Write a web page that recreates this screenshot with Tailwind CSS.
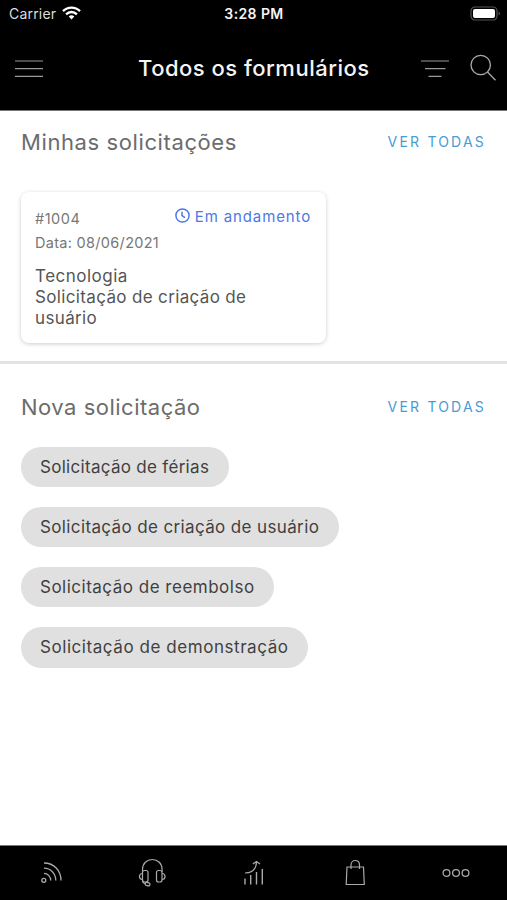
<!DOCTYPE html>
<html lang="pt-BR">
  <head>
    <meta charset="UTF-8" />
    <meta name="viewport" content="width=device-width, initial-scale=1.0" />
    <title>Todos os formulários</title>
    <!-- using tailwind css for styling -->
    <script src="https://cdn.jsdelivr.net/npm/@tailwindcss/browser@4"></script>
  </head>
  <body class="bg-white font-['Inter',sans-serif]">
    <div class="flex h-[900px] w-[507px] flex-col overflow-hidden whitespace-nowrap">
      <!-- status bar and title -->
      <header class="h-[111px] shrink-0 border-b border-[#777] bg-black text-[#f4f4f4]">
        <div class="grid h-[27px] grid-cols-3 items-center pl-[9px] pr-[6px] text-[14px]">
          <div class="flex items-center gap-[6px] text-[#ddd]">
            <span class="tracking-[0.2px]">Carrier</span>
            <svg class="-mt-[1px] h-[14px] w-[19px]" viewBox="0 0 19 14" fill="none" stroke="#fff" stroke-width="2.4">
              <path d="M1 5.1C5.8.4 13.2.4 18 5.1" />
              <path d="M4.1 8.3c3.1-3 7.7-3 10.8 0" />
              <path d="M6.7 10.4 9.5 13.4l2.8-3c-1.6-1.4-4-1.4-5.6 0z" fill="#fff" stroke="none" />
            </svg>
          </div>
          <span class="-ml-[2px] text-center font-semibold tracking-[0.4px]">3:28 PM</span>
          <svg class="-mt-[1px] h-[15px] w-[31px] justify-self-end" viewBox="0 0 31 15">
            <rect x="1" y="1" width="26" height="13" rx="4" fill="none" stroke="#555" stroke-width="1.2" />
            <rect x="3" y="3" width="22" height="9" rx="2" fill="#fff" />
            <path d="M28.6 5.5c1.6.6 1.6 3.4 0 4z" fill="#666" />
          </svg>
        </div>
        <div class="flex h-[83px] items-center pl-[15px] pr-[11px]">
          <svg class="h-[18px] w-7" viewBox="0 0 28 18" stroke="#999" stroke-width="1.2">
            <path d="M0 1h28M0 8.7h28M0 16.4h28" />
          </svg>
          <h1 class="ml-[95px] w-[232px] text-[22px] font-medium tracking-[0.5px]">Todos os formulários</h1>
          <svg class="ml-[51px] h-[18px] w-7" viewBox="0 0 28 18" stroke="#999" stroke-width="1.2">
            <path d="M0 1h28M4 8.7h20.5M7.5 16.4h13" />
          </svg>
          <svg class="-mt-[3px] ml-auto h-[27px] w-[26px]" viewBox="0 0 26 27" fill="none" stroke="#aaa" stroke-width="1.3">
            <circle cx="10.7" cy="11" r="9.7" />
            <path d="m17.5 18 8 8.3" />
          </svg>
        </div>
      </header>

      <main class="flex-1 text-[#6c6c6c]">
        <!-- my requests -->
        <section class="h-[253px] border-b-3 border-[#e3e3e3] px-[21px] pt-[15px]">
          <div class="flex h-8 items-center justify-between">
            <h2 class="text-[22px] tracking-[0.6px]">Minhas solicitações</h2>
            <a class="-mt-[2px] text-[14px] tracking-[2.2px] text-[#489bd5]">VER TODAS</a>
          </div>
          <article class="mt-[34px] h-[151px] w-[305px] rounded-lg px-[14px] pt-[13px] shadow-[0_1px_4px_#0003]">
            <div class="flex items-start justify-between">
              <div class="pt-[2px] text-[14.5px] leading-[24.5px] text-[#777]">
                <p class="tracking-[0.5px]">#1004</p>
                <p class="-mt-[1px] tracking-[0.3px]">Data: 08/06/2021</p>
              </div>
              <div class="mr-[1px] flex items-center gap-[5px] text-[15px] leading-[24px] text-[#4d78e5]">
                <svg class="-mt-[3px] h-[15px] w-[15px]" viewBox="0 0 15 15" fill="none" stroke="currentColor" stroke-width="1.5">
                  <circle cx="7.5" cy="7.5" r="6.6" />
                  <path d="M7 3.7v4l3 2" />
                </svg>
                <span class="tracking-[0.87px]">Em andamento</span>
              </div>
            </div>
            <p class="mt-[11px] text-[17px] leading-[21px] tracking-[0.35px] text-[#555]">
              <span class="tracking-[0.5px]">Tecnologia</span><br />Solicitação de criação de<br />usuário
            </p>
          </article>
        </section>

        <!-- new request -->
        <section class="px-[21px] pt-[27px]">
          <div class="flex h-8 items-center justify-between">
            <h2 class="text-[22px] tracking-[0.5px]">Nova solicitação</h2>
            <a class="-mt-[2px] text-[14px] tracking-[2.2px] text-[#489bd5]">VER TODAS</a>
          </div>
          <div class="mt-[23.5px] flex flex-col items-start gap-5 text-[17px] leading-[40.3px] text-[#404040]">
            <span class="w-[208px] rounded-full bg-[#e0e0e0] pl-[19px] tracking-[0.3px]">Solicitação de férias</span>
            <span class="w-[318px] rounded-full bg-[#e0e0e0] pl-[19px] tracking-[0.37px]">Solicitação de criação de usuário</span>
            <span class="w-[253px] rounded-full bg-[#e0e0e0] pl-[19px] tracking-[0.5px]">Solicitação de reembolso</span>
            <span class="w-[287px] rounded-full bg-[#e0e0e0] pl-[19px] tracking-[0.56px]">Solicitação de demonstração</span>
          </div>
        </section>
      </main>

      <!-- bottom tabs -->
      <nav class="grid h-[55px] shrink-0 grid-cols-5 items-center justify-items-center border-t border-[#777] bg-black">
        <svg class="h-[30px] w-[30px]" viewBox="0 0 30 30" fill="none" stroke="#aaa" stroke-width="1.3">
          <circle cx="7.8" cy="22.3" r="2" />
          <path d="M8 5c10 0 17 7.500 17 17.500M8 10.200c6.500 0 11.800 5.300 11.800 12.300M8 15.300c3.500 0 6.700 3.200 6.700 7.200" />
        </svg>
        <svg class="h-[30px] w-[30px]" viewBox="0 0 30 30" fill="none" stroke="#aaa" stroke-width="1.2">
          <path d="M5.500 14v-2.500C5.500 5.500 9.800 1.500 15.300 1.500s9.800 4 9.800 10V14" />
          <rect x="5.500" y="12.500" width="5.500" height="11.500" rx="2" />
          <rect x="19.500" y="12.500" width="5.500" height="11.500" rx="2" />
          <path d="M5.500 15.500c-4 0-4 6 0 6M25 15.500c4 0 4 6 0 6M5.500 22.500c0 2 1.500 3 3.500 3" />
          <rect x="8" y="24.500" width="5" height="3" rx="1.500" transform="rotate(15 10 26)" />
        </svg>
        <svg class="h-[30px] w-[30px]" viewBox="0 0 30 30" fill="none" stroke="#aaa" stroke-width="1.2">
          <path d="M7 20.500V26.500M12.700 17v9.500M18.500 14v12.500M24.300 11v15.500" stroke-width="1.400" />
          <path d="M7 15c6 0 11-3 11.500-11M14.800 6l3.700-2.600L22 6" />
        </svg>
        <svg class="h-[30px] w-[30px]" viewBox="0 0 30 30" fill="none" stroke="#aaa" stroke-width="1.2">
          <path d="M7 9h16.500l.8 17.500H6.200z" />
          <path d="M11 11V7c0-6 8.500-6 8.500 0v4" />
        </svg>
        <svg class="h-[30px] w-[30px]" viewBox="0 0 30 30" fill="none" stroke="#aaa" stroke-width="1.3">
          <circle cx="5.500" cy="15" r="3.400" />
          <circle cx="15" cy="15" r="3.400" />
          <circle cx="24.500" cy="15" r="3.400" />
        </svg>
      </nav>
    </div>
  </body>
</html>
